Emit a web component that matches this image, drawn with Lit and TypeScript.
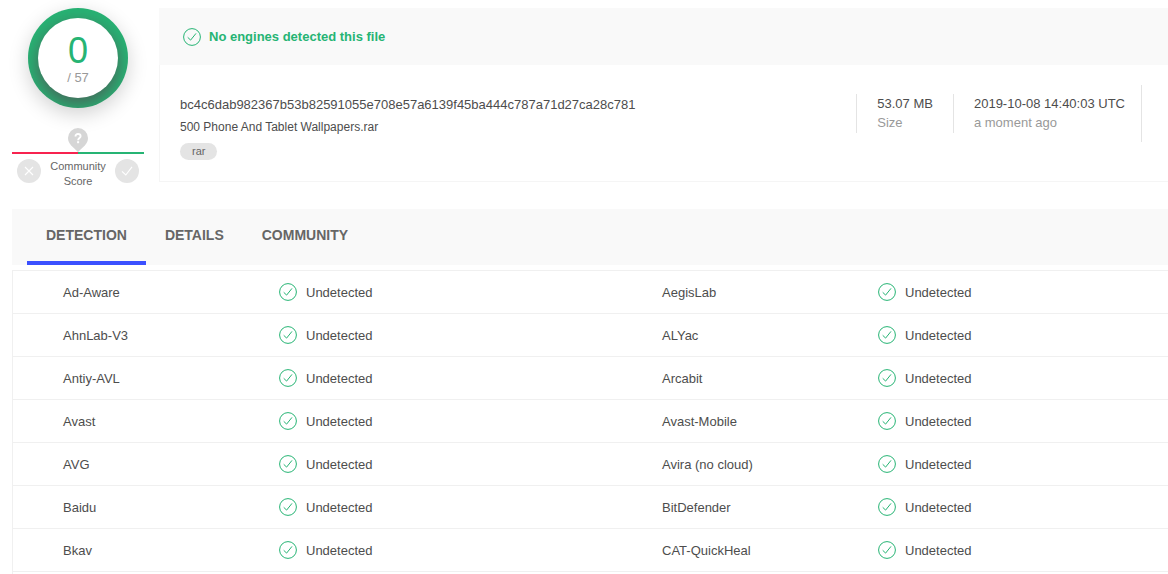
import { LitElement, html, css, svg } from "lit";
import { customElement, property, state } from "lit/decorators.js";

const ENGINES: [string, string][] = [
  ["Ad-Aware", "AegisLab"],
  ["AhnLab-V3", "ALYac"],
  ["Antiy-AVL", "Arcabit"],
  ["Avast", "Avast-Mobile"],
  ["AVG", "Avira (no cloud)"],
  ["Baidu", "BitDefender"],
  ["Bkav", "CAT-QuickHeal"],
];

const checkIcon = html`
  <svg class="check" viewBox="0 0 18 18" width="18" height="18" aria-hidden="true">
    ${svg`<circle cx="9" cy="9" r="8.4" /><path d="M4.7 9.3 7.6 12.1 13 5.4" />`}
  </svg>
`;

const checkStyles = css`
  .check {
    display: block;
    flex: none;
    fill: none;
    stroke: #26b474;
    stroke-width: 1;
  }
`;

@customElement("score-widget")
class ScoreWidget extends LitElement {
  @property({ type: Number }) positives = 0;
  @property({ type: Number }) total = 0;

  static styles = css`
    :host {
      display: flex;
      flex-direction: column;
      align-items: center;
    }
    .ring {
      box-sizing: border-box;
      width: 100px;
      height: 100px;
      padding: 10px;
      border-radius: 50%;
      background: #26b474;
      box-shadow: 0 6px 20px rgba(0, 0, 0, 0.18);
    }
    .disc {
      display: flex;
      flex-direction: column;
      align-items: center;
      height: 80px;
      border-radius: 50%;
      background: #fff;
      box-shadow: 0 6px 18px rgba(90, 60, 75, 0.7);
      clip-path: circle(50px at 50% 50%);
    }
    .positives {
      margin-top: 13px;
      font-size: 36px;
      line-height: 39px;
      color: #26b474;
    }
    .total {
      font-size: 13px;
      line-height: 15px;
      color: #999;
    }
    .pin {
      display: block;
      margin-top: 20px;
    }
    .scale {
      align-self: stretch;
      height: 2px;
      background: linear-gradient(to right, #f7234f 50%, #26b474 50%);
    }
    .votes {
      box-sizing: border-box;
      display: flex;
      justify-content: space-between;
      align-self: stretch;
      padding: 5px;
    }
    .caption {
      font-size: 11px;
      line-height: 15px;
      text-align: center;
      color: #666;
    }
    button {
      width: 24px;
      height: 24px;
      padding: 0;
      border: 0;
      border-radius: 50%;
      background: #e4e4e4;
    }
    button svg {
      display: block;
      fill: none;
      stroke: #fff;
      stroke-width: 1.1;
    }
  `;

  render() {
    return html`
      <div class="ring">
        <div class="disc">
          <span class="positives">${this.positives}</span>
          <span class="total">/ ${this.total}</span>
        </div>
      </div>
      <svg class="pin" width="20" height="24" viewBox="0 0 20 24" aria-hidden="true">
        <path fill="#d6d6d6" d="M10 0a10 10 0 0 1 10 10c0 3-1.300 5.300-3.200 7.400L10 24 3.200 17.400C1.300 15.300 0 13 0 10A10 10 0 0 1 10 0Z" />
        <path fill="none" stroke="#fff" stroke-width="1.900" d="M7.500 8.400C7.500 6.900 8.500 6 10 6s2.600.8 2.600 2.200c0 1.700-2.500 1.900-2.500 4" />
        <rect x="9.100" y="13.200" width="2" height="2" fill="#fff" />
      </svg>
      <div class="scale"></div>
      <div class="votes">
        <button aria-label="Malicious">
          <svg width="24" height="24" viewBox="0 0 24 24"><path d="m8 8 8 8m0-8-8 8" /></svg>
        </button>
        <div class="caption">Community<br />Score</div>
        <button aria-label="Harmless">
          <svg width="24" height="24" viewBox="0 0 24 24"><path d="m7 12.300 3.800 3.700L17 7.800" /></svg>
        </button>
      </div>
    `;
  }
}

@customElement("file-card")
class FileCard extends LitElement {
  static styles = [
    checkStyles,
    css`
      :host {
        display: block;
      }
      .banner {
        display: flex;
        align-items: center;
        gap: 8px;
        padding: 20px 24px 19px;
        background: #f9f9f9;
        font-size: 13px;
        line-height: 18px;
        font-weight: bold;
        color: #26b474;
      }
      .details {
        display: flex;
        justify-content: space-between;
        padding: 20px 26px 20px 20px;
        border: solid #f5f5f5;
        border-width: 0 0 1px 1px;
      }
      .names {
        display: flex;
        flex-direction: column;
        align-items: flex-start;
        padding: 8px 0 1px;
        line-height: 23px;
        color: #4d4d4d;
      }
      .hash {
        font-size: 13px;
      }
      .name {
        font-size: 12px;
      }
      .tag {
        margin-top: 4px;
        padding: 0 12px;
        border-radius: 9px;
        background: #e4e4e4;
        font-size: 11px;
        line-height: 17px;
        color: #666;
        text-decoration: none;
      }
      .facts {
        display: flex;
        align-items: center;
        align-self: flex-start;
        height: 57px;
        border-right: 1px solid #e4e4e4;
      }
      .fact {
        padding: 0 16px 1px 20px;
        border-left: 1px solid #e4e4e4;
        font-size: 13px;
        line-height: 19px;
        color: #4d4d4d;
        white-space: nowrap;
      }
      .fact.short {
        padding-right: 20px;
      }
      .note {
        color: #999;
      }
    `,
  ];

  render() {
    return html`
      <div class="banner">${checkIcon}<span>No engines detected this file</span></div>
      <div class="details">
        <div class="names">
          <span class="hash">bc4c6dab982367b53b82591055e708e57a6139f45ba444c787a71d27ca28c781</span>
          <span class="name">500 Phone And Tablet Wallpapers.rar</span>
          <a class="tag" href="#rar">rar</a>
        </div>
        <div class="facts">
          <div class="fact short">
            <div>53.07 MB</div>
            <div class="note">Size</div>
          </div>
          <div class="fact">
            <div>2019-10-08 14:40:03 UTC</div>
            <div class="note">a moment ago</div>
          </div>
        </div>
      </div>
    `;
  }
}

@customElement("detection-table")
class DetectionTable extends LitElement {
  static styles = [
    checkStyles,
    css`
      :host {
        display: block;
        border: solid #f0f0f0;
        border-width: 1px 0 0 1px;
      }
      table {
        width: 100%;
        border-collapse: separate;
        border-spacing: 0;
        table-layout: fixed;
      }
      .engine {
        width: 216px;
      }
      .lead {
        width: 266px;
      }
      .result {
        width: 383px;
      }
      th,
      td {
        box-sizing: border-box;
        height: 43px;
        padding: 0;
        border-bottom: 1px solid #f0f0f0;
        font-size: 13px;
        font-weight: normal;
        text-align: left;
        color: #4d4d4d;
      }
      th:first-child {
        padding-left: 50px;
      }
      .status {
        display: flex;
        align-items: center;
        gap: 9px;
      }
    `,
  ];

  render() {
    const status = html`<td><div class="status">${checkIcon}<span>Undetected</span></div></td>`;
    return html`
      <table aria-label="Detection">
        <colgroup>
          <col class="lead" />
          <col class="result" />
          <col class="engine" />
          <col />
        </colgroup>
        <tbody>
          ${ENGINES.map(
            ([left, right]) => html`
              <tr>
                <th scope="row">${left}</th>
                ${status}
                <th>${right}</th>
                ${status}
              </tr>
            `
          )}
        </tbody>
      </table>
    `;
  }
}

@customElement("app-root")
class AppRoot extends LitElement {
  @state() private active = "DETECTION";

  static styles = css`
    :host {
      box-sizing: border-box;
      display: flex;
      flex-direction: column;
      min-height: 100vh;
      padding: 8px 0 0 12px;
      background: #fff;
      font-family: "Liberation Sans", Arial, sans-serif;
    }
    .summary {
      display: grid;
      grid-template-columns: 132px 1fr;
      column-gap: 15px;
      align-items: start;
      margin-bottom: 15px;
    }
    .tabs {
      display: flex;
      height: 56px;
      margin-bottom: 5px;
      padding-left: 15px;
      background: #f9f9f9;
    }
    .tab {
      padding: 0 19px;
      border: solid transparent;
      border-width: 0 0 4px;
      background: none;
      font: bold 14px "Liberation Sans", Arial, sans-serif;
      color: #666;
    }
    .tab.active {
      border-color: #3b50ff;
    }
    detection-table {
      flex: 1;
    }
  `;

  render() {
    return html`
      <div class="summary">
        <score-widget .positives=${0} .total=${57}></score-widget>
        <file-card></file-card>
      </div>
      <div class="tabs" role="tablist">
        ${["DETECTION", "DETAILS", "COMMUNITY"].map(
          (name) => html`
            <button
              class="tab ${name === this.active ? "active" : ""}"
              role="tab"
              aria-selected=${name === this.active}
              @click=${() => (this.active = name)}
            >
              ${name}
            </button>
          `
        )}
      </div>
      <detection-table></detection-table>
    `;
  }
}
